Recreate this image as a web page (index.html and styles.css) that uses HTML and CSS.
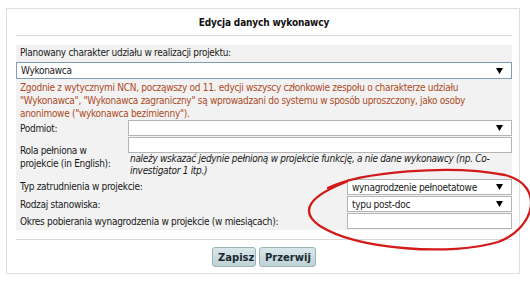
FILE: index.html
```html
<!DOCTYPE html>
<html lang="pl">
<head>
<meta charset="utf-8">
<title>Edycja danych wykonawcy</title>
<link rel="stylesheet" href="styles.css">
</head>
<body>
<div class="panel">
  <div class="title">Edycja danych wykonawcy</div>
  <div class="rule"></div>
  <div class="form">
    <div class="toplabel">Planowany charakter udziału w realizacji projektu:</div>
    <div class="select select-focus"><span>Wykonawca</span><svg class="arrow" width="7" height="6" viewBox="0 0 7 6"><polygon points="0,0 7,0 3.5,6" fill="#000"/></svg></div>
    <div class="note">Zgodnie z wytycznymi NCN, począwszy od 11. edycji wszyscy członkowie zespołu o charakterze udziału "Wykonawca", "Wykonawca zagraniczny" są wprowadzani do systemu w sposób uproszczony, jako osoby anonimowe ("wykonawca bezimienny").</div>
    <div class="grid1">
      <div class="lbl">Podmiot:</div>
      <div class="select"><span></span><svg class="arrow" width="7" height="6" viewBox="0 0 7 6"><polygon points="0,0 7,0 3.5,6" fill="#000"/></svg></div>
      <div class="lbl lbl-rola">Rola pełniona w<br>projekcie (in English):</div>
      <div class="rolebox">
        <div class="input"></div>
        <div class="hint">należy wskazać jedynie pełnioną w projekcie funkcję, a nie dane wykonawcy (np. Co-investigator 1 itp.)</div>
      </div>
    </div>
    <div class="grid2">
      <div class="lbl">Typ zatrudnienia w projekcie:</div>
      <div class="select"><span>wynagrodzenie pełnoetatowe</span><svg class="arrow" width="7" height="6" viewBox="0 0 7 6"><polygon points="0,0 7,0 3.5,6" fill="#000"/></svg></div>
      <div class="lbl">Rodzaj stanowiska:</div>
      <div class="select"><span>typu post-doc</span><svg class="arrow" width="7" height="6" viewBox="0 0 7 6"><polygon points="0,0 7,0 3.5,6" fill="#000"/></svg></div>
      <div class="lbl">Okres pobierania wynagrodzenia w projekcie (w miesiącach):</div>
      <div class="input"></div>
    </div>
  </div>
  <div class="rule rule-bottom"></div>
  <div class="buttons">
    <button class="btn btn-save">Zapisz</button>
    <button class="btn btn-cancel">Przerwij</button>
  </div>
</div>
<svg class="mark" width="530" height="282" viewBox="0 0 530 282">
  <path d="M 328 188 C 360 172, 450 164, 505 175 C 545 185, 536 228, 498 242 C 452 256, 358 250, 320 226 C 298 211, 310 196, 346 182" fill="none" stroke="#d21a1a" stroke-width="2.3" stroke-linecap="round"/>
</svg>
</body>
</html>
```

FILE: styles.css
```css
html, body {
  margin: 0;
  padding: 0;
  background: #fff;
}
body {
  position: relative;
  width: 530px;
  height: 282px;
  overflow: hidden;
  font-family: "DejaVu Sans Condensed", "Liberation Sans", sans-serif;
  font-size: 10px;
  letter-spacing: -0.3px;
  color: #1a1a1a;
}
.panel {
  margin: 8px 0 0 6px;
  width: 496px;
  border: 1px solid #dedede;
  padding: 0 7px 6px 9px;
}
.title {
  height: 26px;
  line-height: 28px;
  text-align: center;
  font-weight: bold;
  font-size: 10px;
  letter-spacing: -0.15px;
  color: #111;
}
.rule {
  height: 1px;
  background: #d9d9d9;
  margin-bottom: 9px;
}
.rule-bottom {
  margin-top: 9px;
  margin-bottom: 7px;
}
.form {
  background: #f2f2f2;
  padding-bottom: 1px;
}
.toplabel {
  height: 16px;
  line-height: 16px;
  padding-left: 4px;
}
.select {
  box-sizing: border-box;
  height: 16px;
  background: #fff;
  border: 1px solid #b4b4b4;
  display: flex;
  align-items: center;
  justify-content: space-between;
  padding: 0 8px 0 4px;
}
.select-focus {
  height: 17px;
  margin-top: 1px;
  border-color: #7f9db9;
}
.arrow {
  display: block;
  flex: none;
}
.input {
  box-sizing: border-box;
  height: 16px;
  background: #fff;
  border: 1px solid #b4b4b4;
}
.note {
  margin-top: 2px;
  padding-left: 4px;
  line-height: 13px;
  color: #ad4b1e;
}
.grid1 {
  display: grid;
  grid-template-columns: 112px 1fr;
  row-gap: 1px;
  align-items: center;
}
.lbl {
  padding-left: 4px;
  line-height: 13px;
}
.rolebox {
  display: flex;
  flex-direction: column;
}
.hint {
  font-style: italic;
  line-height: 12px;
  padding-left: 2px;
}
.grid2 {
  display: grid;
  grid-template-columns: 331px 1fr;
  row-gap: 1px;
  align-items: center;
}
.grid2 > .select:nth-of-type(2) {
  margin-top: 2px;
}
.buttons {
  display: flex;
  justify-content: center;
  gap: 3px;
}
.btn {
  height: 20px;
  padding: 0 5px;
  border: 1px solid #9db3b8;
  border-radius: 3px;
  background: linear-gradient(#d9e7ea, #bed2d6);
  font-family: "DejaVu Sans", "Liberation Sans", sans-serif;
  font-weight: bold;
  font-size: 10px;
  letter-spacing: 0;
  color: #1b2a33;
}
.btn-save { width: 44px; }
.btn-cancel { width: 57px; }
.mark {
  position: absolute;
  left: 0;
  top: 0;
  pointer-events: none;
}
```
